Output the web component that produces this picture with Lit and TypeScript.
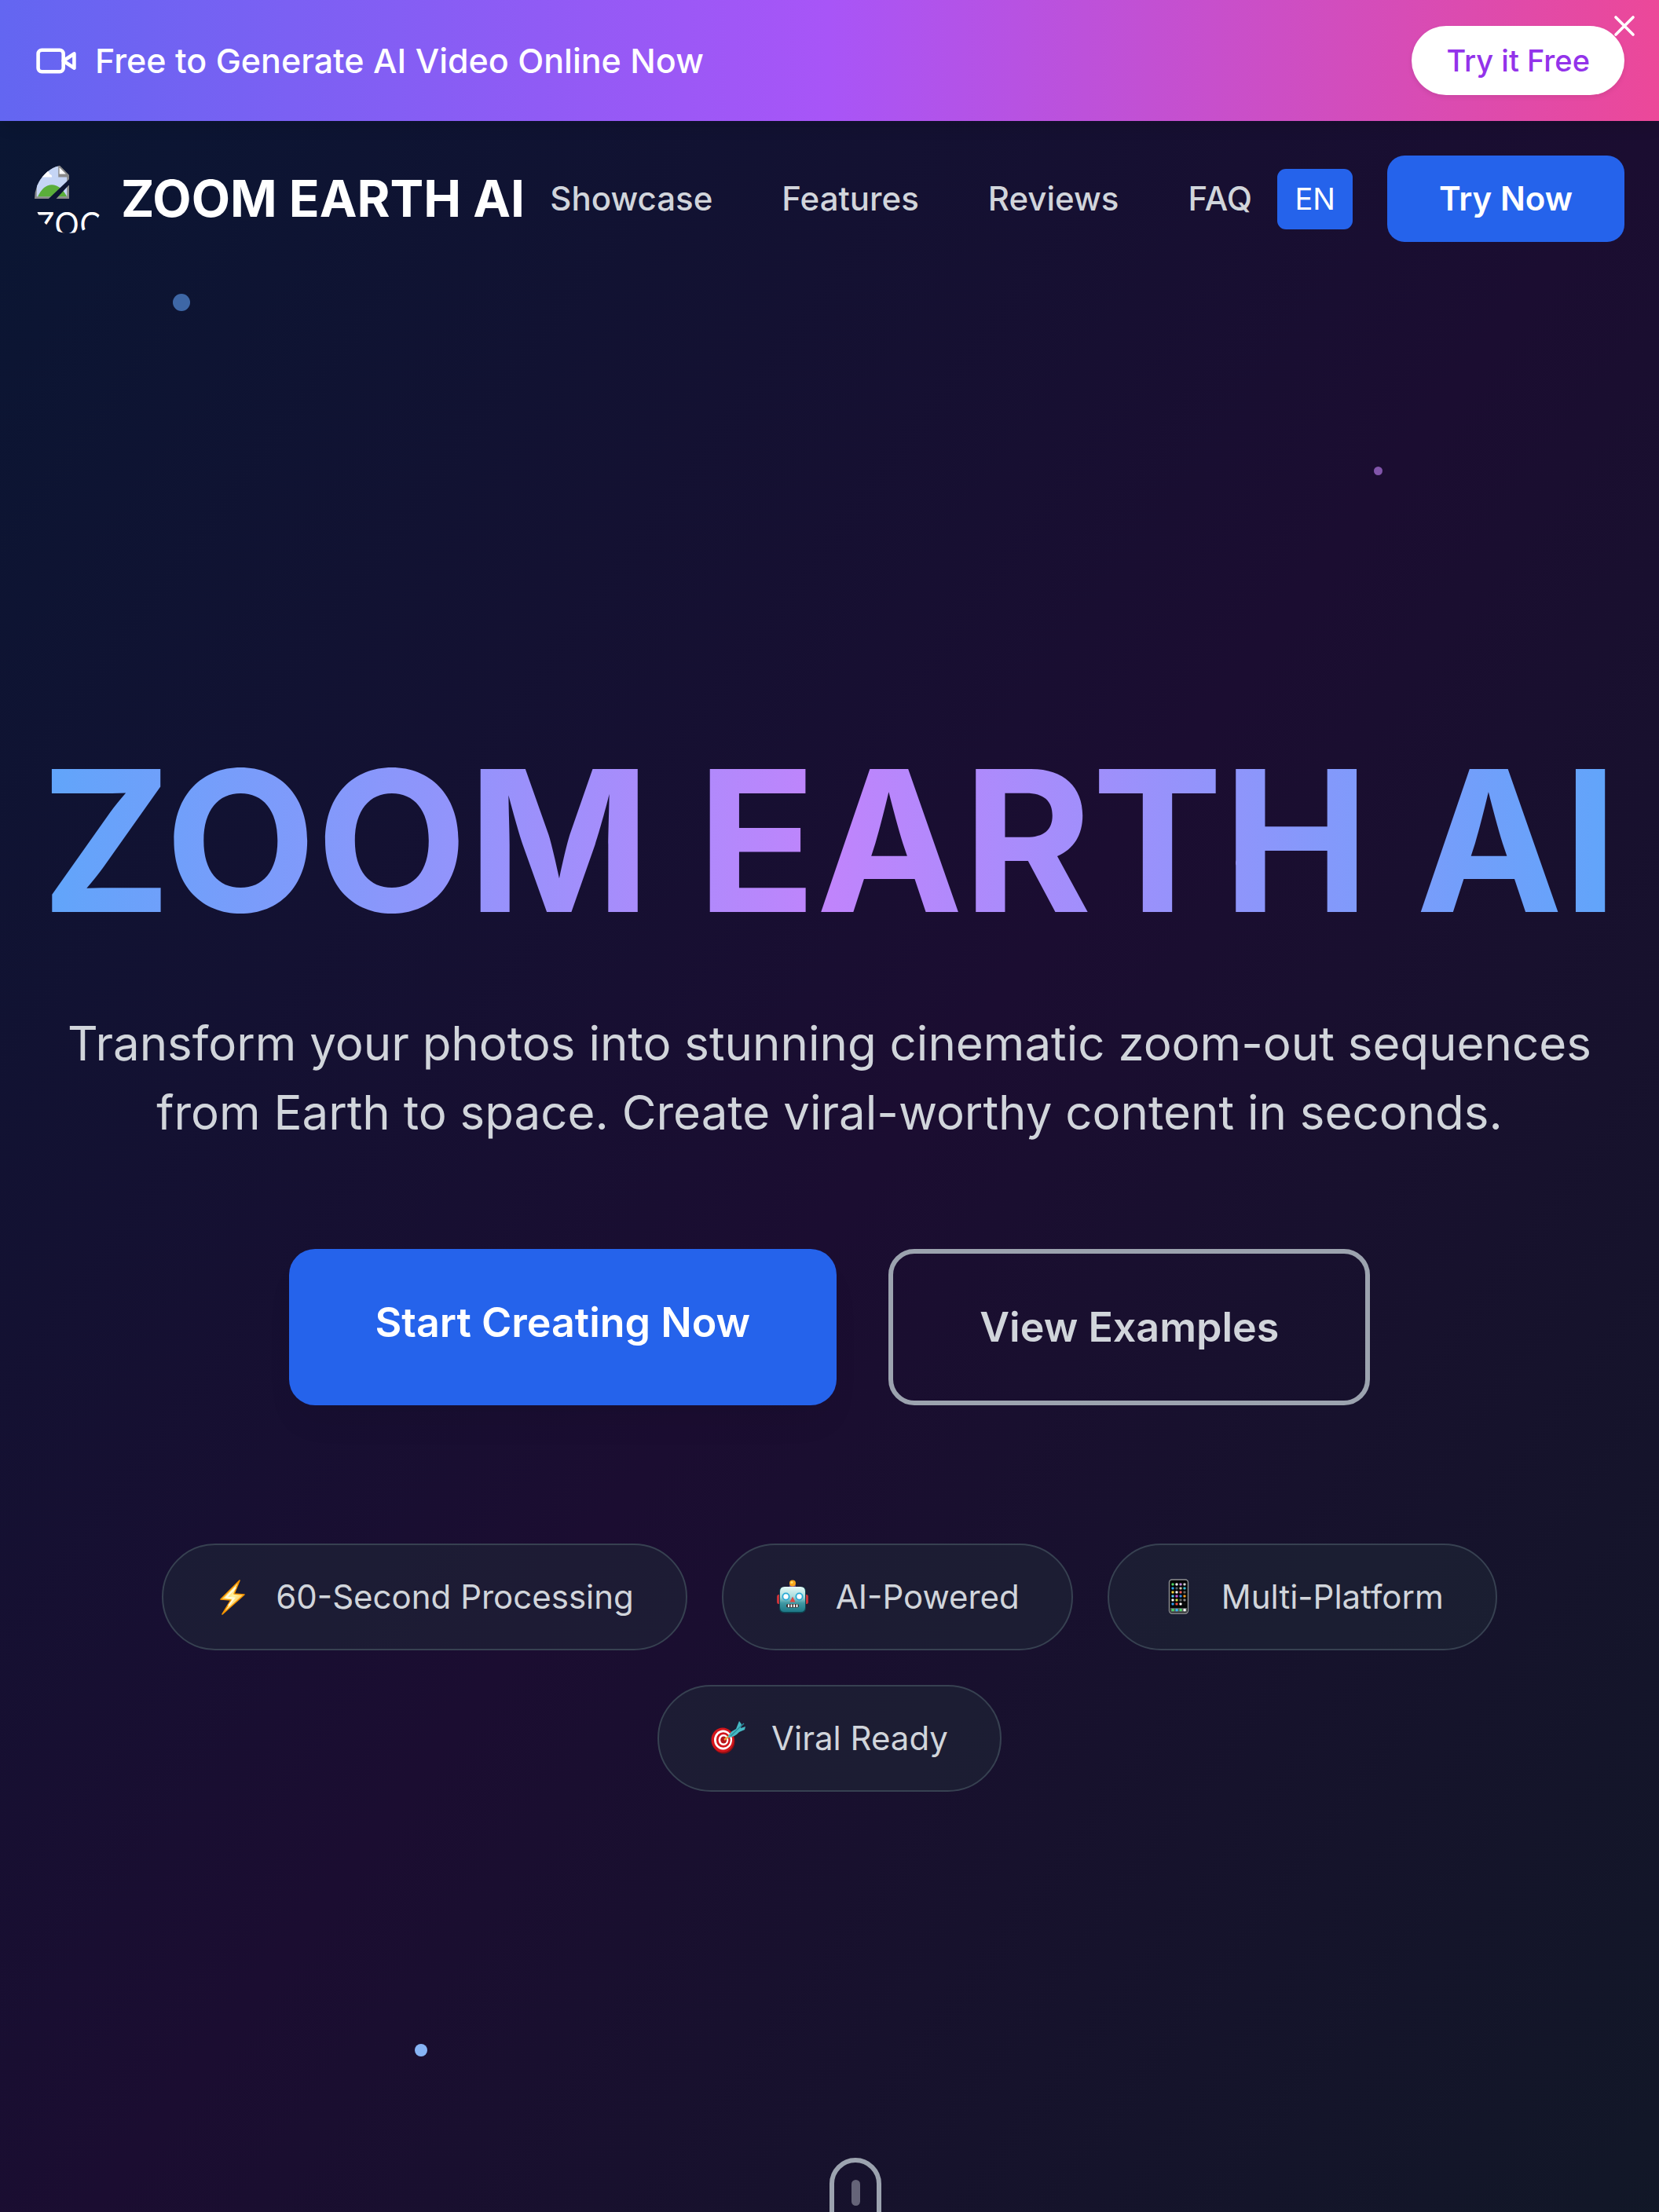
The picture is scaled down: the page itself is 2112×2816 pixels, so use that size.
import { LitElement, html, css, svg } from "lit";
import { customElement } from "lit/decorators.js";

const bolt = svg`
  <defs>
    <linearGradient id="bolt-fill" x1="0" y1="0" x2="1" y2="1">
      <stop offset="0" stop-color="#ffb81c"></stop>
      <stop offset="0.5" stop-color="#fff3a0"></stop>
      <stop offset="1" stop-color="#ff9d0a"></stop>
    </linearGradient>
  </defs>
  <path d="M31 2 L7 26 L20 27 L9 45 L37 20 L24 19 Z" fill="url(#bolt-fill)" stroke="#f59300" stroke-width="1.6" stroke-linejoin="round"></path>
  <path d="M26 11 L14 23.500 L24 24.500 L17 34" fill="none" stroke="#fffbe0" stroke-width="2"></path>`;

const robot = svg`
  <defs>
    <linearGradient id="robot-fill" x1="0" y1="0" x2="0" y2="1">
      <stop offset="0" stop-color="#e4f8f6"></stop>
      <stop offset="0.4" stop-color="#a9dcdc"></stop>
      <stop offset="0.65" stop-color="#3f98a3"></stop>
      <stop offset="1" stop-color="#1d7887"></stop>
    </linearGradient>
  </defs>
  <rect x="2" y="20" width="5" height="12" rx="2.500" fill="#c9333a"></rect>
  <rect x="37" y="20" width="5" height="12" rx="2.500" fill="#c9333a"></rect>
  <rect x="18" y="7" width="8" height="5" rx="1.500" fill="#6b4a93"></rect>
  <circle cx="22" cy="5.500" r="4" fill="#f8a51b"></circle>
  <circle cx="21" cy="4.500" r="1.600" fill="#ffdc6b"></circle>
  <path d="M11 10 H33 Q39 10 39 16 V37 Q39 43.500 32 43.500 H12 Q5 43.500 5 37 V16 Q5 10 11 10 Z" fill="#0d4450"></path>
  <path d="M12 10 H32 Q38 10 38 16 V36 Q38 42 32 42 H12 Q6 42 6 36 V16 Q6 10 12 10 Z" fill="url(#robot-fill)"></path>
  <circle cx="13.500" cy="22.500" r="5" fill="#27a9d6"></circle>
  <circle cx="30.500" cy="22.500" r="5" fill="#27a9d6"></circle>
  <circle cx="13.500" cy="22.500" r="3.200" fill="#ffffff"></circle>
  <circle cx="30.500" cy="22.500" r="3.200" fill="#ffffff"></circle>
  <path d="M22 22.500 L25.500 29.500 H18.500 Z" fill="#e04a44"></path>
  <rect x="14" y="32" width="16" height="4.500" rx="2" fill="#3a2b2b"></rect>
  <path d="M17 32.500 V36 M20.500 32.500 V36 M24 32.500 V36 M27.500 32.500 V36" stroke="#ffffff" stroke-width="2"></path>`;

const appColours = [
  ["#4cd964", "#ffffff", "#c08ae0", "#d8d8d8"],
  ["#2fa7f0", "#555a60", "#d9c9a8", "#36c3d8"],
  ["#f5d33b", "#ffffff", "#f2605c", "#6a6a6a"],
  ["#59c8f5", "#d05ad8", "#2f8df0", "#f59a23"],
  ["#ffffff", "#d0e04a", "#6a6a6a", "#8d8d8d"],
  ["#2f9cf0", "#f0483e", "#ffffff", "#111111"],
];

const phone = svg`
  <rect x="10.500" y="1" width="24" height="43" rx="3.500" fill="#050607" stroke="#8d8f92" stroke-width="1.400"></rect>
  ${appColours.map((row, r) =>
    row.map(
      (colour, c) =>
        svg`<rect x=${13.5 + c * 5} y=${5.5 + r * 5} width="3" height="3" rx="0.800" fill=${colour}></rect>`,
    ),
  )}
  <rect x="12" y="37" width="21" height="5.500" fill="#54595c"></rect>
  <rect x="13.500" y="38" width="3.200" height="3.200" rx="0.800" fill="#4cd964"></rect>
  <rect x="18.500" y="38" width="3.200" height="3.200" rx="0.800" fill="#35b8f2"></rect>
  <rect x="23.500" y="38" width="3.200" height="3.200" rx="0.800" fill="#4cd964"></rect>
  <rect x="28.500" y="38" width="3.200" height="3.200" rx="0.800" fill="#ffffff"></rect>`;

const dart = svg`
  <ellipse cx="16" cy="26.500" rx="14.500" ry="16" fill="#8e0f14"></ellipse>
  <ellipse cx="15" cy="25" rx="14.500" ry="15.500" fill="#d3161c"></ellipse>
  <ellipse cx="15.500" cy="25" rx="11.500" ry="12.500" fill="#ffffff"></ellipse>
  <ellipse cx="15.800" cy="25" rx="9" ry="9.800" fill="#d3161c"></ellipse>
  <ellipse cx="16" cy="25" rx="6.400" ry="7" fill="#ffffff"></ellipse>
  <ellipse cx="16.200" cy="25" rx="4" ry="4.500" fill="#b3151b"></ellipse>
  <path d="M17 25 L25 19" stroke="#e8a33d" stroke-width="2.500"></path>
  <path d="M22 22 Q22 16 32 11 L36 1 L39 5 L38 10 L44 8 L43 12 L36 15 Q30 22 22 22 Z" fill="#45b8c4"></path>
  <path d="M25 20 L42 4" stroke="#2a8d9b" stroke-width="1.400"></path>`;

const features = [
  { icon: bolt, label: "60-Second Processing" },
  { icon: robot, label: "AI-Powered" },
  { icon: phone, label: "Multi-Platform" },
  { icon: dart, label: "Viral Ready" },
];

const links = ["Showcase", "Features", "Reviews", "FAQ"];

@customElement("promo-banner")
export class PromoBanner extends LitElement {
  static styles = css`
    :host {
      display: flex;
      position: relative;
      z-index: 1;
      align-items: center;
      justify-content: space-between;
      padding: 33px 44px;
      color: #ffffff;
      background: linear-gradient(to right, #6366f1, #a855f7, #ec4899);
      box-shadow: 0 11px 17px -3px rgba(0, 0, 0, 0.12);
    }
    .message {
      display: flex;
      align-items: center;
      gap: 22px;
      font-size: 43px;
      line-height: 66px;
      font-weight: 500;
    }
    .camera {
      width: 55px;
      height: 55px;
    }
    .offer {
      padding: 16px 44px;
      border-radius: 44px;
      font-size: 38px;
      line-height: 56px;
      font-weight: 500;
      color: #9333ea;
      text-decoration: none;
      background: #ffffff;
      box-shadow: 0 3px 6px rgba(0, 0, 0, 0.08);
    }
    .close {
      display: block;
      position: absolute;
      top: 11px;
      right: 22px;
      width: 44px;
      height: 44px;
      padding: 0;
      border: 0;
      color: inherit;
      background: none;
    }
    .close svg {
      display: block;
    }
  `;

  render() {
    return html`
      <div class="message">
        <svg class="camera" viewBox="0 0 24 24" fill="none" stroke="currentColor" stroke-width="2" stroke-linecap="round" stroke-linejoin="round" aria-hidden="true">
          <path d="m22 8-6 4 6 4V8Z"></path>
          <rect x="2" y="6" width="14" height="12" rx="2"></rect>
        </svg>
        <span>Free to Generate AI Video Online Now</span>
      </div>
      <a class="offer" href="#try">Try it Free</a>
      <button class="close" type="button" aria-label="Close">
        <svg viewBox="0 0 24 24" fill="none" stroke="currentColor" stroke-width="2" stroke-linecap="round" aria-hidden="true">
          <path d="M18 6 6 18M6 6l12 12"></path>
        </svg>
      </button>
    `;
  }
}

@customElement("site-nav")
export class SiteNav extends LitElement {
  static styles = css`
    :host {
      display: flex;
      align-items: center;
      justify-content: space-between;
      padding: 44px;
      font-size: 42px;
      line-height: 66px;
      font-weight: 500;
    }
    a {
      color: inherit;
      text-decoration: none;
    }
    .brand,
    .links,
    .actions {
      display: flex;
      align-items: center;
      white-space: nowrap;
    }
    .brand {
      gap: 22px;
      font-size: 64px;
      font-weight: 700;
      color: #ffffff;
    }
    .logo {
      width: 88px;
      height: 88px;
      border-radius: 50%;
      overflow: hidden;
      font-size: 42px;
      line-height: 66px;
      font-weight: 400;
    }
    .logo svg {
      display: block;
      width: 44px;
      height: 44px;
    }
    .links {
      gap: 88px;
      color: #d1d5db;
    }
    .actions {
      gap: 44px;
    }
    .language {
      padding: 11px 22px;
      border: 0;
      border-radius: 11px;
      font: inherit;
      font-size: 38px;
      line-height: 55px;
      font-weight: 400;
      color: #ffffff;
      background: #2563eb;
    }
    .try {
      padding: 22px 66px;
      border-radius: 22px;
      font-weight: 600;
      color: #ffffff;
      background: #2563eb;
    }
  `;

  render() {
    return html`
      <a class="brand" href="#top">
        <span class="logo">
          <svg viewBox="0 0 16 16" aria-hidden="true">
            <path d="M0 0H11L16 5V16H0Z" fill="#8a8a8a"></path>
            <path d="M1 1H11V6H15V15H1Z" fill="#c5d5f5"></path>
            <path d="M11.500 1.500V4.500H14.500Z" fill="#ffffff"></path>
            <path d="M3 5a2 2 0 0 1 4-.3 1 1 0 0 1 1 1.300H3Z" fill="#ffffff"></path>
            <path d="M1.500 15Q4 9.500 8 9.500T15 15Z" fill="#5aae3a"></path>
            <path d="M16 7V9.500L10 16H6.500Z" fill="#0c1533"></path>
          </svg>
          <span>ZOOM</span>
        </span>
        <span>ZOOM EARTH AI</span>
      </a>
      <nav class="links">
        ${links.map((name) => html`<a href="#${name.toLowerCase()}">${name}</a>`)}
      </nav>
      <div class="actions">
        <button class="language" type="button">EN</button>
        <a class="try" href="#try">Try Now</a>
      </div>
    `;
  }
}

@customElement("app-root")
export class AppRoot extends LitElement {
  static styles = css`
    :host {
      display: flex;
      flex-direction: column;
      height: 100vh;
      overflow: hidden;
      font-family: Inter, "Liberation Sans", sans-serif;
      color: #d1d5db;
      background: #111827;
    }
    .hero {
      display: flex;
      position: relative;
      flex: none;
      flex-direction: column;
      min-height: 100vh;
      background: linear-gradient(to bottom right, #0a1633, #1b0d31, #111827);
    }
    .content {
      display: flex;
      position: relative;
      flex: 1;
      flex-direction: column;
      align-items: center;
      justify-content: center;
      padding: 0 44px 104px;
      text-align: center;
    }
    .title {
      margin: 0 0 82px;
      font-size: 250px;
      line-height: 264px;
      font-weight: 700;
      white-space: nowrap;
      color: transparent;
      background: linear-gradient(to right, #60a5fa, #c084fc, #60a5fa);
      background-clip: text;
      -webkit-background-clip: text;
    }
    .lead {
      max-width: 1980px;
      margin: 0 0 130px;
      font-size: 60px;
      line-height: 88px;
    }
    .buttons {
      display: flex;
      gap: 66px;
      margin-bottom: 176px;
      font-size: 52px;
      line-height: 77px;
      font-weight: 600;
    }
    .button {
      padding: 55px 110px;
      border-radius: 33px;
      color: inherit;
      text-decoration: none;
    }
    .primary {
      color: #ffffff;
      background: #2563eb;
      box-shadow: 0 28px 40px -8px rgba(0, 0, 0, 0.06);
    }
    .secondary {
      border: 6px solid #9ca3af;
    }
    .features {
      display: flex;
      flex-wrap: wrap;
      justify-content: center;
      gap: 44px;
      margin: 0;
      padding: 0;
      list-style: none;
      font-size: 42px;
      line-height: 66px;
    }
    .feature {
      display: flex;
      align-items: center;
      gap: 22px;
      padding: 33px 66px;
      border: 2px solid #374151;
      border-radius: 70px;
      background: rgba(31, 41, 55, 0.5);
    }
    .feature svg {
      width: 55px;
      height: 46px;
    }
    .star {
      position: absolute;
      border-radius: 50%;
    }
    .star-a {
      top: 220px;
      left: 220px;
      width: 22px;
      height: 22px;
      background: #3e67a6;
    }
    .star-b {
      top: 440px;
      right: 352px;
      width: 11px;
      height: 11px;
      background: #8155aa;
    }
    .star-c {
      bottom: 352px;
      left: 25%;
      width: 16px;
      height: 16px;
      background: #87b4f5;
    }
    .star-d {
      top: calc(100% / 3);
      right: 25%;
      width: 11px;
      height: 11px;
      background: #b58ae0;
    }
    .scroll {
      display: flex;
      position: absolute;
      bottom: 113px;
      left: 50%;
      justify-content: center;
      box-sizing: border-box;
      width: 66px;
      height: 110px;
      padding-top: 22px;
      border: 6px solid #9ca3af;
      border-radius: 33px;
    }
    .wheel {
      width: 11px;
      height: 33px;
      border-radius: 6px;
      background: #656478;
    }
  `;

  render() {
    return html`
      <promo-banner></promo-banner>
      <main class="hero" id="top">
        <span class="star star-a"></span>
        <span class="star star-b"></span>
        <span class="star star-c"></span>
        <span class="star star-d"></span>
        <site-nav></site-nav>
        <section class="content">
          <h1 class="title">ZOOM EARTH AI</h1>
          <p class="lead">
            Transform your photos into stunning cinematic zoom-out sequences from
            Earth to space. Create viral-worthy content in seconds.
          </p>
          <div class="buttons">
            <a class="button primary" href="#create">Start Creating Now</a>
            <a class="button secondary" href="#showcase">View Examples</a>
          </div>
          <ul class="features">
            ${features.map(
              (feature) => html`
                <li class="feature">
                  <svg viewBox="0 0 46 46" preserveAspectRatio="xMinYMid meet" aria-hidden="true">${feature.icon}</svg>
                  <span>${feature.label}</span>
                </li>
              `,
            )}
          </ul>
        </section>
        <div class="scroll"><span class="wheel"></span></div>
      </main>
    `;
  }
}
